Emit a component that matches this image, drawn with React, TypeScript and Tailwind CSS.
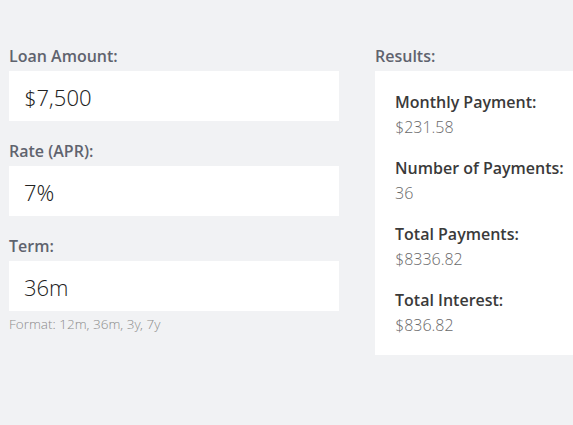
import React from "react";

const font = { fontFamily: '"Open Sans", "Noto Sans", sans-serif' };
const light = { fontFamily: '"Open Sans Light", "Open Sans", "Noto Sans", sans-serif' };

function Field({ label, value, hint }: { label: string; value: string; hint?: string }) {
  return (
    <div className="flex flex-col">
      <div className="text-[16px] leading-[24px] font-semibold text-[#5f636e]">{label}</div>
      <div
        style={light}
        className="mt-[3px] h-[50px] bg-white flex items-center pl-[15px] pt-[2px] text-[22px] font-light text-[#222]"
      >
        {value}
      </div>
      {hint && (
        <div style={light} className="mt-[3px] text-[13.5px] leading-[20px] font-light text-[#8c8c8c]">
          {hint}
        </div>
      )}
    </div>
  );
}

function Result({ label, value }: { label: string; value: string }) {
  return (
    <div className="flex flex-col">
      <div className="text-[16px] leading-[24px] font-semibold text-[#3a3a3a] whitespace-nowrap">{label}</div>
      <div style={light} className="text-[16px] leading-[26px] font-light text-[#6a6a6a] whitespace-nowrap">
        {value}
      </div>
    </div>
  );
}

export default function App() {
  return (
    <div style={font} className="w-[573px] h-[425px] overflow-hidden bg-[#f1f2f4]">
      <div className="flex pt-[44px] pl-[9px] gap-[36px]">
        <div className="w-[330px] shrink-0 flex flex-col gap-[18px]">
          <Field label="Loan Amount:" value="$7,500" />
          <Field label="Rate (APR):" value="7%" />
          <Field label="Term:" value="36m" hint="Format: 12m, 36m, 3y, 7y" />
        </div>
        <div className="w-[240px] shrink-0 flex flex-col">
          <div className="text-[16px] leading-[24px] font-semibold text-[#5f636e]">Results:</div>
          <div className="mt-[3px] bg-white pt-[19px] pb-[17px] pl-[20px] flex flex-col gap-[16px]">
            <Result label="Monthly Payment:" value="$231.58" />
            <Result label="Number of Payments:" value="36" />
            <Result label="Total Payments:" value="$8336.82" />
            <Result label="Total Interest:" value="$836.82" />
          </div>
        </div>
      </div>
    </div>
  );
}
